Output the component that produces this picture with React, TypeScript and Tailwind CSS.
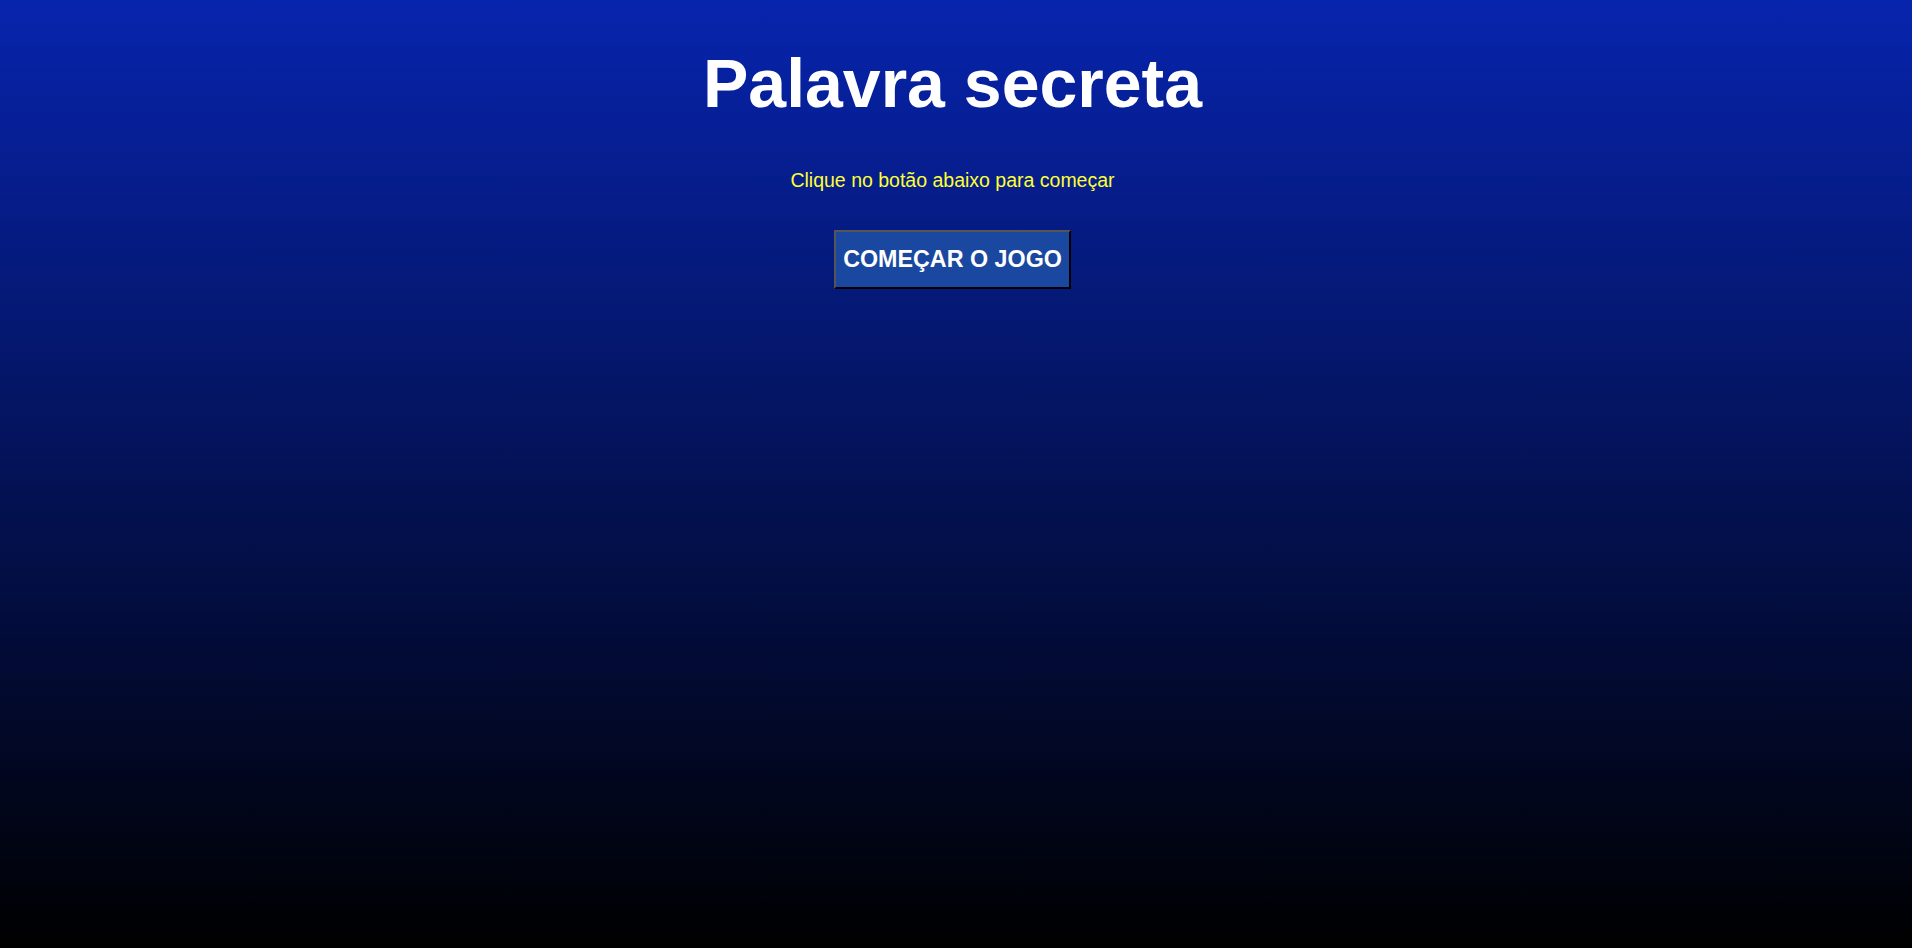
import React from 'react';

const App = () => {
  const handleStart = () => {
    // game start goes here
  };

  return (
    <div className="min-h-screen w-full bg-linear-to-b/srgb from-[#0724ad] to-black font-['Liberation_Sans',Arial,sans-serif] text-center">
      <div className="flex flex-col items-center pt-[41px] pr-[7px]">
        {/* Title */}
        <h1 className="text-[68px] leading-[84px] font-bold text-white">Palavra secreta</h1>

        {/* Subtitle */}
        <p className="mt-[44px] text-[19.5px] leading-[22px] text-[#ffff33]">Clique no botão abaixo para começar</p>

        {/* Start button */}
        <button
          type="button"
          onClick={handleStart}
          className="mt-[39px] w-[237px] h-[59px] bg-[#1a47a0] border-2 border-t-[#555555] border-l-[#555555] border-r-black border-b-black text-white text-[23.3px] font-bold"
        >
          COMEÇAR O JOGO
        </button>
      </div>
    </div>
  );
};

export default App;
